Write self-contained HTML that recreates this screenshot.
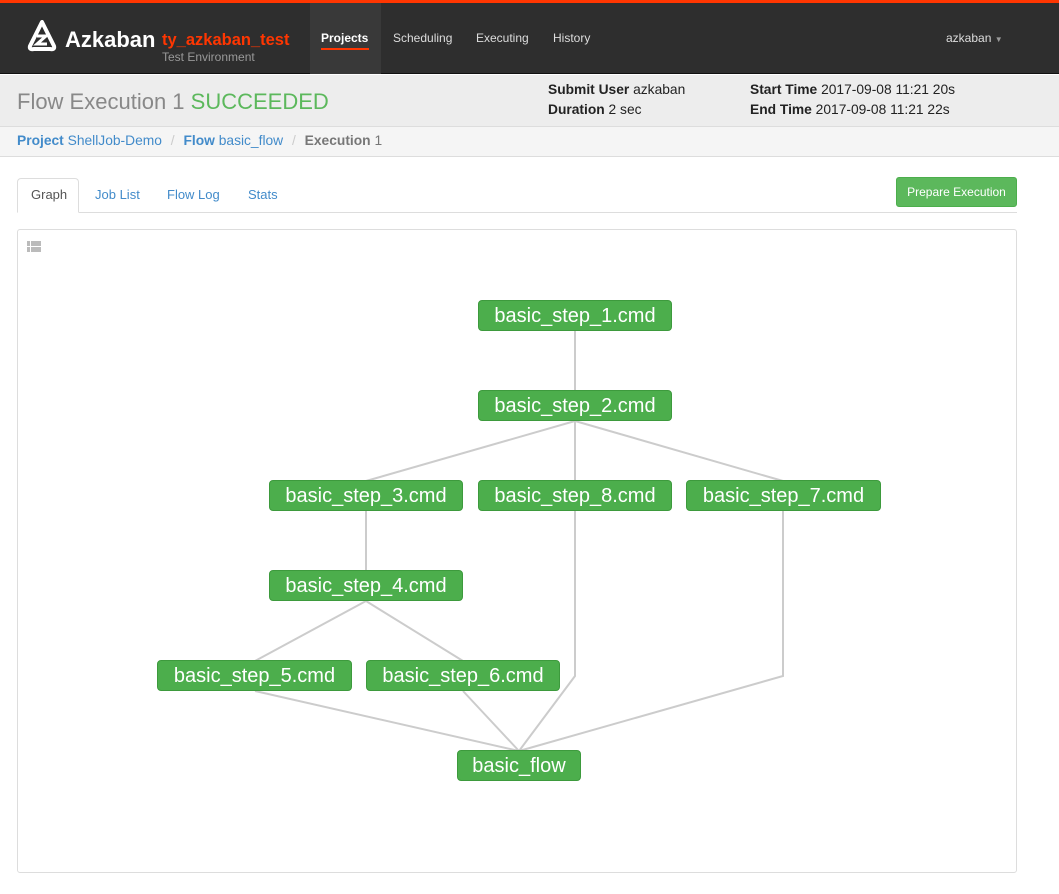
<!DOCTYPE html>
<html><head><style>
*{box-sizing:border-box;margin:0;padding:0}
body{width:1059px;height:894px;background:#fff;font-family:"Liberation Sans",Arial,sans-serif;position:relative;overflow:hidden}
.top{position:absolute;left:0;top:0;width:1059px;height:3px;background:#ff3601}
.nav{position:absolute;left:0;top:3px;width:1059px;height:71px;background:#2e2e2e;border-bottom:1px solid #111}
.nav a{position:absolute;top:28px;font-size:12px;color:#ddd}
.sub{position:absolute;left:0;top:75px;width:1059px;height:52px;background:#ededed;border-bottom:1px solid #ddd}
.bc{position:absolute;left:0;top:127px;width:1059px;height:30px;background:#f5f5f5;border-bottom:1px solid #ddd;font-size:14px;padding:6px 17px;color:#428bca}
.bc b{font-weight:bold}
.tabs{position:absolute;left:17px;top:212px;width:1000px;border-top:1px solid #ddd}
.tab{position:absolute;top:187px;font-size:13px;color:#428bca}
.graph{position:absolute;left:17px;top:229px;width:1000px;height:644px;border:1px solid #ddd;border-radius:3px}
.n{position:absolute;height:31px;background:#4cae4c;border:1px solid #3d9a3d;border-radius:4px;color:#fff;font-size:20px;text-align:center;line-height:30px;white-space:nowrap}
.ib{font-size:13.8px;color:#222;position:absolute}
</style></head><body>
<div class="top"></div>
<div class="nav">
<svg style="position:absolute;left:26px;top:17px" width="32" height="32" viewBox="0 0 32 32"><path d="M16 2 L4 26 Q3 30 8 29 L24 29 Q29 30 28 26 Z" fill="none" stroke="#fff" stroke-width="4" stroke-linejoin="round"/><path d="M11 16 L20 16 L11 24 L21 24" fill="none" stroke="#fff" stroke-width="3"/></svg>
<div style="position:absolute;left:65px;top:24px;font-size:22px;font-weight:bold;color:#fff">Azkaban</div>
<div style="position:absolute;left:162px;top:28px;font-size:16.5px;font-weight:bold;color:#ff3601">ty_azkaban_test</div>
<div style="position:absolute;left:162px;top:47px;font-size:12px;color:#999">Test Environment</div>
<div style="position:absolute;left:310px;top:0;width:71px;height:71px;background:#393939"></div>
<a style="left:321px;color:#fff;font-weight:bold">Projects</a>
<div style="position:absolute;left:321px;top:45px;width:48px;height:2px;background:#ff3601"></div>
<a style="left:393px">Scheduling</a>
<a style="left:476px">Executing</a>
<a style="left:553px">History</a>
<a style="left:946px">azkaban <span style="font-size:8px;color:#999">▼</span></a>
</div>
<div class="sub">
<div style="position:absolute;left:17px;top:14px;font-size:22px;color:#888">Flow Execution 1 <span style="color:#5cb85c">SUCCEEDED</span></div>
<div class="ib" style="left:548px;top:7px"><b>Submit User</b> azkaban</div>
<div class="ib" style="left:548px;top:27px"><b>Duration</b> 2 sec</div>
<div class="ib" style="left:750px;top:7px"><b>Start Time</b> 2017-09-08 11:21 20s</div>
<div class="ib" style="left:750px;top:27px"><b>End Time</b> 2017-09-08 11:21 22s</div>
</div>
<div class="bc" style="font-size:13.8px"><b>Project</b> ShellJob-Demo <span style="color:#ccc;margin:0 5px">/</span> <b>Flow</b> basic_flow <span style="color:#ccc;margin:0 5px">/</span> <span style="color:#777"><b>Execution</b> 1</span></div>
<div class="tabs"></div>
<div style="position:absolute;left:17px;top:178px;width:62px;height:35px;border:1px solid #ddd;border-bottom-color:#fff;border-radius:4px 4px 0 0;background:#fff"></div>
<div class="tab" style="left:31px;color:#555">Graph</div>
<div class="tab" style="left:95px">Job List</div>
<div class="tab" style="left:167px">Flow Log</div>
<div class="tab" style="left:248px">Stats</div>
<div style="position:absolute;left:896px;top:177px;width:121px;height:30px;background:#5cb85c;border:1px solid #4cae4c;border-radius:3px;color:#fff;font-size:12px;text-align:center;line-height:28px">Prepare Execution</div>
<div class="graph"></div>
<svg style="position:absolute;left:27px;top:241px" width="14" height="12"><rect x="0" y="0" width="3" height="5" fill="#bbb"/><rect x="4" y="0" width="10" height="5" fill="#bbb"/><rect x="0" y="6" width="3" height="5" fill="#bbb"/><rect x="4" y="6" width="10" height="5" fill="#bbb"/></svg>
<svg style="position:absolute;left:0;top:0" width="1059" height="894" fill="none" stroke="#ccc" stroke-width="2">
<path d="M575 331V391M575 421L366 481M575 421V481M575 421L783 481M366 511V571M366 601L255 661M366 601L463 661M575 511V676L519 751M783 511V676L519 751M255 691L519 751M463 691L519 751"/>
</svg>
<div class="n" style="left:478px;top:300px;width:194px">basic_step_1.cmd</div>
<div class="n" style="left:478px;top:390px;width:194px">basic_step_2.cmd</div>
<div class="n" style="left:269px;top:480px;width:194px">basic_step_3.cmd</div>
<div class="n" style="left:478px;top:480px;width:194px">basic_step_8.cmd</div>
<div class="n" style="left:686px;top:480px;width:195px">basic_step_7.cmd</div>
<div class="n" style="left:269px;top:570px;width:194px">basic_step_4.cmd</div>
<div class="n" style="left:157px;top:660px;width:195px">basic_step_5.cmd</div>
<div class="n" style="left:366px;top:660px;width:194px">basic_step_6.cmd</div>
<div class="n" style="left:457px;top:750px;width:124px">basic_flow</div>
</body></html>
